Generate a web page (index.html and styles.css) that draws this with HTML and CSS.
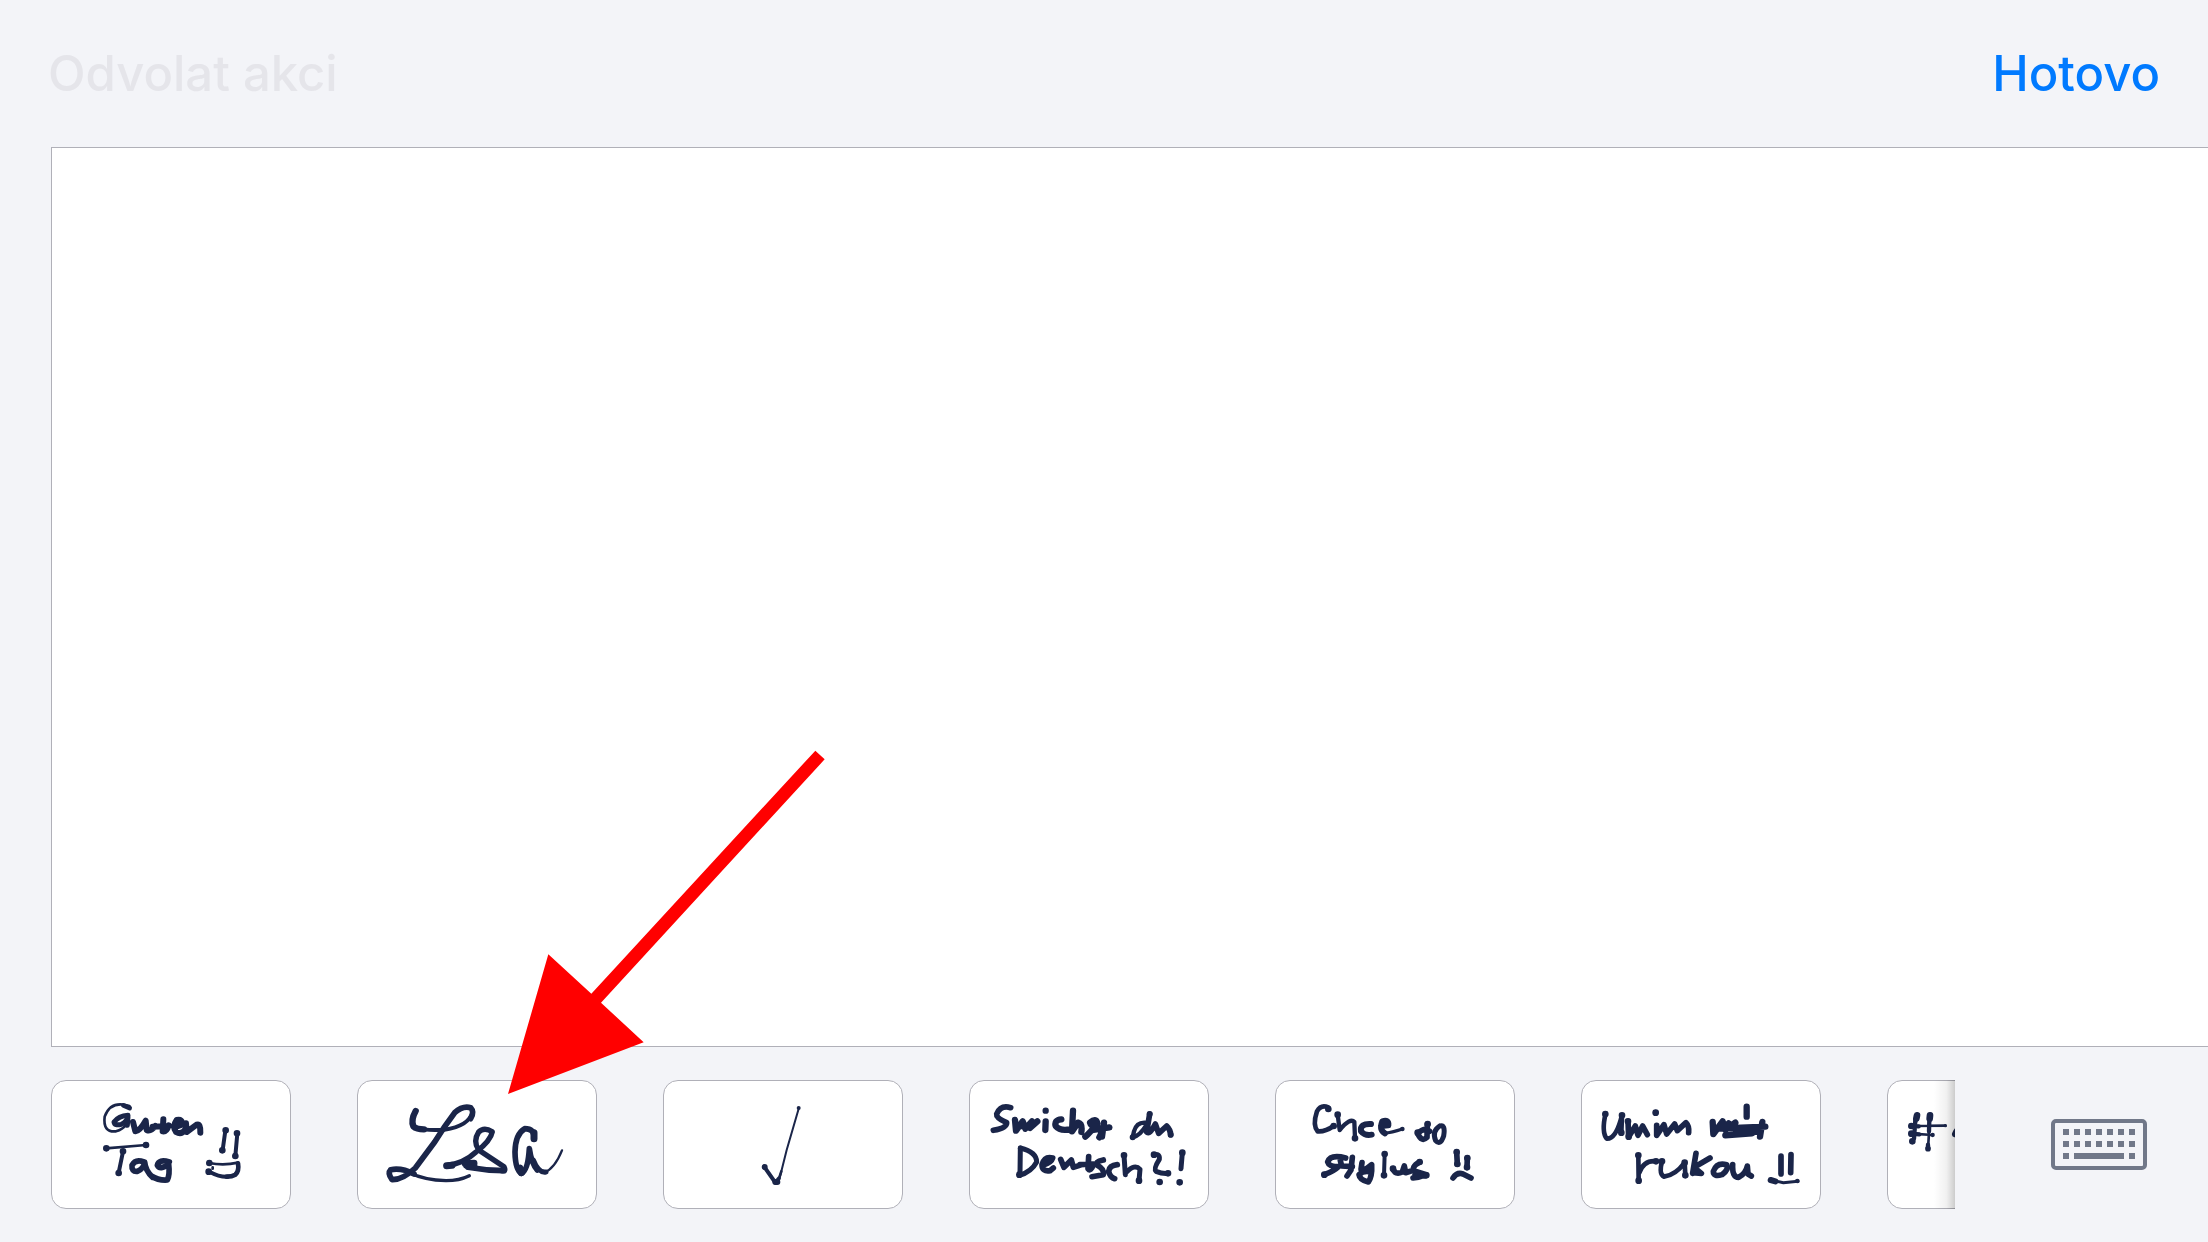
FILE: index.html
```
<!DOCTYPE html>
<html lang="cs">
<head>
    <meta charset="UTF-8">
    <meta name="viewport" content="width=device-width, initial-scale=1.0">
    <title>Rukopis</title>
    <link rel="stylesheet" href="styles.css">
</head>
<body>
    <header class="toolbar">
        <button class="toolbar-button" type="button" disabled>Odvolat akci</button>
        <button class="toolbar-button done" type="button">Hotovo</button>
    </header>

    <main class="canvas"></main>

    <footer class="tray">
        <div class="history">
            <button class="card" type="button" aria-label="Guten Tag">
                <svg class="ink" viewBox="36 33 714 381">
                    <path class="thin" d="M268 108Q212 90 194 140Q188 188 228 184Q248 178 258 164"/>
                    <path d="M250 106L269 114" stroke-width="14"/>
                    <path d="M264 136Q236 138 222 156Q224 168 244 163Q260 156 264 140L262 166" stroke-width="15"/>
                    <path d="M279 156L286 184Q300 182 317 152L320 180Q332 186 346 168M370 148L368 184Q380 186 386 166M338 170L386 168M402 172L426 164Q428 146 410 150Q396 170 408 186Q424 196 436 178M438 160L440 186L470 164Q482 160 481 188" stroke-width="18"/>
                    <path class="thin" d="M198 235L318 225M508 279Q550 288 594 278M518 292L518 296"/>
                    <path d="M249 245L236 308M556 182L548 240M592 190L586 258" stroke-width="12"/>
                    <path d="M508 305Q540 322 564 320" stroke-width="12"/>
                    <path d="M594 280Q598 304 586 314Q576 320 560 320"  stroke-width="14"/>
                    <path d="M199 235h0M318 225h0M249 244h0M236 309h0M557 181h0M547 241h0M591 190h0M586 258h0M508 279h0M506 305h0" stroke-width="20"/>
                    <path d="M312 276Q286 266 276 286Q274 306 292 304Q312 296 314 276Q316 302 338 322M388 276Q356 266 352 286Q360 302 386 282Q390 314 382 330Q356 332 334 318"/>
                </svg>
            </button>
            <button class="card" type="button" aria-label="Lsa">
                <svg class="ink" viewBox="36 33 714 381">
                    <path d="M209 123Q194 150 202 169Q212 178 234 178" stroke-width="19"/>
                    <path d="M206 172Q240 183 295 179Q370 168 380 124" stroke-width="12"/>
                    <path d="M190 308Q236 330 300 332Q340 332 370 317" stroke-width="10"/>
                    <path d="M374 146Q386 126 374 113Q350 106 326 128Q294 170 266 216L208 294Q170 330 138 329Q124 310 134 299Q168 293 204 312" stroke-width="17"/>
                    <path d="M301 287Q354 280 390 246Q434 212 439 185Q414 170 398 186Q380 214 398 240L474 290Q482 306 466 302" stroke-width="16"/>
                    <path d="M302 287L318 286M358 281L384 280M362 286L384 290" stroke-width="21"/>
                    <path d="M366 292Q420 302 474 302" stroke-width="17"/>
                    <path d="M564 205Q566 176 536 176Q508 192 507 246Q508 300 526 310Q546 302 550 236Q556 280 574 300" stroke-width="17"/>
                    <path d="M562 270Q578 310 600 306" stroke-width="15"/>
                    <path d="M594 308Q626 296 648 241" stroke-width="7"/>
                    <path d="M564 188L564 206M522 294L526 308" stroke-width="21"/>
                </svg>
            </button>
            <button class="card" type="button" aria-label="Fajfka">
                <svg class="ink" viewBox="36 33 714 381">
                    <path d="M440 116L404 240L383 324" stroke-width="6"/>
                    <path d="M338 292L370 338L380 326" stroke-width="12"/>
                    <path d="M338 291h0M370 336h0M376 336h0" stroke-width="18"/>
                    <path d="M440 114h0" stroke-width="12"/>
                    <path d="M378 334L388 304" stroke-width="8"/>
                </svg>
            </button>
            <button class="card" type="button" aria-label="Sprichst du Deutsch?!">
                <svg class="ink" viewBox="30 33 714 381">
                    <path d="M152 113Q122 104 110 132Q108 144 140 158Q140 174 100 181"/>
                    <path d="M165 150L168 182L188 154L196 176L216 154L210 174L232 154M176 168L214 168M257 154L256 180M257 122h0M304 148Q282 150 287 168Q300 184 330 178M339 122L336 184L354 158Q368 162 364 186M376 200Q390 188 412 160Q408 142 390 158Q392 168 412 174Q434 176 418 202M432 158L426 200M400 180L448 172" stroke-width="19"/>
                    <path d="M569 132L560 186Q568 196 586 162L596 190L620 168Q632 180 632 194"/>
                    <path d="M556 158Q530 156 522 184L518 202Q540 198 560 164" stroke-width="13"/>
                    <path d="M518 202h0M569 132h0M632 194h0" stroke-width="18"/>
                    <path d="M181 234L180 312" stroke-width="15"/>
                    <path d="M181 234Q230 246 230 276Q214 306 178 316" stroke-width="15"/>
                    <path d="M248 286Q274 278 278 264Q254 258 246 284Q246 306 270 302L280 294M302 268L312 292L334 270L340 292L366 284M386 260L384 296Q392 306 400 284M360 284L400 282M430 270Q402 276 412 286Q434 298 430 314L396 320M472 284Q448 286 446 304Q450 322 464 326"/>
                    <path d="M492 256L496 314M498 308Q524 280 540 298L537 332M582 254Q600 250 598 268Q580 296 588 304Q608 312 624 310M667 248L663 296" stroke-width="15"/>
                    <path d="M492 256h0M537 332h0M582 254h0M624 310h0M599 336h0M659 337h0M667 248h0M178 314h0" stroke-width="20"/>
                </svg>
            </button>
            <button class="card" type="button" aria-label="Chce to stylus">
                <svg class="ink" viewBox="33 33 714 381">
                    <path d="M190 112Q168 102 156 124Q142 166 158 184Q180 186 206 168" stroke-width="14"/>
                    <path d="M218 134L224 180Q256 142 268 156L270 204" stroke-width="13"/>
                    <path d="M318 162Q284 160 288 184Q300 198 320 194M348 168L370 166Q372 148 352 154Q342 180 360 190" stroke-width="18"/>
                    <path d="M358 190Q380 188 412 177" stroke-width="9"/>
                    <path d="M487 162L486 202Q470 218 458 190Q480 170 494 184"/>
                    <path d="M524 168Q500 184 512 212Q526 228 536 198Q542 162 524 168" stroke-width="15"/>
                    <path d="M190 117h0M218 134h0M206 168h0M270 205h0M488 162h0M458 188h0" stroke-width="20"/>
                    <path d="M412 177h0" stroke-width="14"/>
                    <path d="M242 264Q196 252 188 276Q192 290 220 290Q208 302 178 314M262 262L258 300L246 318M226 272L230 288L262 290M291 278L288 298Q300 302 320 284Q322 320 310 336Q284 330 282 314Q296 300 318 306"/>
                    <path d="M359 252L357 316" stroke-width="12"/>
                    <path d="M384 296Q390 316 412 306L418 288L422 308L436 304M464 276Q436 292 450 304L484 314Q464 322 444 324M450 314L480 318M575 246L577 282M607 264L606 292M564 324Q576 306 594 312L618 324"/>
                    <path d="M178 314h0M359 252h0M357 316h0M384 296h0M464 276h0M575 246h0M607 264h0M577 282h0M606 292h0M484 316h0" stroke-width="20"/>
                </svg>
            </button>
            <button class="card" type="button" aria-label="Umím psát rukou">
                <svg class="ink" viewBox="30 33 714 381">
                    <path d="M101 130Q88 186 104 206Q132 208 150 136L148 188" stroke-width="14"/>
                    <path d="M168 154L170 200L190 168L198 196L212 168L226 194M254 166L254 196L276 164L284 192L308 162L316 182L342 158Q352 168 350 188M251 128h0"/>
                    <path d="M100 132h0M150 136h0M148 188h0M168 154h0M170 200h0M251 128h0" stroke-width="20"/>
                    <path d="M422 156L424 192L452 154L460 180L490 158M434 176L580 170M460 196L540 190M470 160L500 186M524 110L524 140M571 156L564 200M490 178L564 186" stroke-width="19"/>
                    <path d="M199 256L200 334M202 308Q216 270 252 274M270 274Q260 312 276 320Q310 316 338 278L340 316" stroke-width="14"/>
                    <path d="M372 250L362 310M414 264L366 292L388 310L364 308M464 284Q434 276 424 304Q424 322 450 314Q474 296 462 284M482 284Q480 322 500 322Q522 310 526 288L528 312L538 318M627 258L627 312M657 254L656 308"/>
                    <path d="M199 256h0M200 332h0M340 316h0M338 278h0M270 274h0M252 274h0" stroke-width="20"/>
                    <path d="M596 330L634 338L678 334" stroke-width="9"/>
                    <path d="M596 330L610 334" stroke-width="18"/>
                    <path d="M676 333h0" stroke-width="14"/>
                </svg>
            </button>
            <button class="card" type="button" aria-label="#">
                <svg class="ink" viewBox="54 33 714 381">
                    <path d="M141 136L128 216M180 136L174 238M124 168L226 167M124 191L188 195" stroke-width="8"/>
                    <path d="M141 136L139 146M180 136L179 146M124 168h0M124 191h0M127 214h0" stroke-width="20"/>
                    <path d="M124 168L146 169M124 191L148 193M178 150L177 184M174 224L174 236M188 195h0M136 150L132 206" stroke-width="13"/>
                    <path d="M174 236h0" stroke-width="17"/>
                    <path d="M226 167h0" stroke-width="10"/>
                    <path d="M256 192Q260 180 274 174" stroke-width="20"/>
                </svg>
            </button>
        </div>
        <button class="keyboard-button" type="button" aria-label="Klávesnice">
            <svg class="keyboard-icon" viewBox="0 0 96 51">
                <rect x="2" y="2" width="92" height="47" rx="3" fill="none" stroke="currentColor" stroke-width="4"/>
                <path fill="currentColor" d="M12 10h6v6h-6zM23 10h6v6h-6zM34 10h6v6h-6zM45 10h6v6h-6zM56 10h6v6h-6zM67 10h6v6h-6zM78 10h6v6h-6zM12 22h6v6h-6zM23 22h6v6h-6zM34 22h6v6h-6zM45 22h6v6h-6zM56 22h6v6h-6zM67 22h6v6h-6zM78 22h6v6h-6zM12 34h6v6h-6zM23 34h50v6h-50zM78 34h6v6h-6z"/>
            </svg>
        </button>
    </footer>

    <!-- pointer to the second card -->
    <svg class="arrow" viewBox="81 60 957 1032" aria-hidden="true">
        <path d="M1006 62L1034 88L363 818L491 937L84 1092L205 673L334 791Z"/>
    </svg>
</body>
</html>
```

FILE: styles.css
```
* {
    box-sizing: border-box;
}

body {
    margin: 0;
    min-height: 100vh;
    display: flex;
    flex-direction: column;
    position: relative;
    background: #f3f4f8;
    font-family: Inter, "Liberation Sans", sans-serif;
}

button {
    padding: 0;
    border: none;
    background: none;
    font: inherit;
    cursor: pointer;
}

.toolbar {
    display: flex;
    justify-content: space-between;
    align-items: center;
    height: 147px;
    padding: 0 48px;
}

.toolbar-button {
    font-size: 49px;
    font-weight: 500;
    line-height: 60px;
}

.toolbar-button:disabled {
    color: #e5e5ea;
    cursor: default;
}

.done {
    color: #007aff;
}

.canvas {
    flex: 1;
    margin-left: 51px;
    background: #fff;
    border: 1px solid #b0b0b8;
    border-right: none;
}

.tray {
    display: flex;
    align-items: center;
    padding: 33px 61px 33px 51px;
}

.history {
    position: relative;
    flex: 1;
    min-width: 0;
    display: flex;
    gap: 66px;
    overflow: hidden;
}

/* fade on the edge where the list scrolls off */
.history::after {
    content: "";
    position: absolute;
    top: 0;
    right: 0;
    bottom: 0;
    width: 21px;
    background: linear-gradient(to right, rgba(0, 0, 0, 0), rgba(0, 0, 0, 0.06) 60%, rgba(0, 0, 0, 0.2));
}

.card {
    flex: none;
    width: 240px;
    height: 129px;
    border: 1px solid #b0b0b8;
    border-radius: 15px;
    background: #fff;
}

.ink {
    display: block;
    width: 100%;
    fill: none;
    stroke: #1a2549;
    stroke-width: 17px;
    stroke-linecap: round;
    stroke-linejoin: round;
}

.thin {
    stroke-width: 8px;
}

.keyboard-button {
    margin-left: 96px;
    color: #717889;
}

.keyboard-icon {
    display: block;
    width: 96px;
}

.arrow {
    position: absolute;
    left: 507px;
    bottom: 148px;
    width: 319px;
    fill: #f00;
    pointer-events: none;
}
```
